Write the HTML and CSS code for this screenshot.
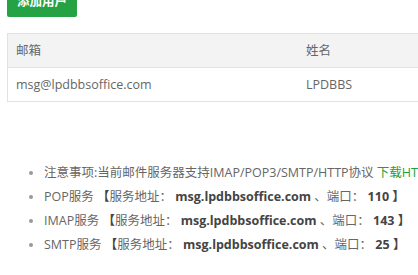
FILE: index.html
```html
<!DOCTYPE html>
<html lang="zh">
<head>
<meta charset="utf-8">
<link rel="stylesheet" href="styles.css">
</head>
<body>
<div class="page">
  <div class="toolbar">
    <button class="btn">添加用户</button>
  </div>
  <div class="table-wrap">
    <table class="table">
      <thead>
        <tr><th class="col-mail">邮箱</th><th>姓名</th></tr>
      </thead>
      <tbody>
        <tr><td class="col-mail">msg@lpdbbsoffice.com</td><td>LPDBBS</td></tr>
      </tbody>
    </table>
  </div>
  <ul class="notes">
    <li>注意事项:当前邮件服务器支持IMAP/POP3/SMTP/HTTP协议 <a class="link" href="#">下载HTTP客户端</a></li>
    <li>POP服务 <b>【</b>服务地址： <b>msg.lpdbbsoffice.com</b> 、端口： <b>110 】</b></li>
    <li>IMAP服务 <b>【</b>服务地址： <b>msg.lpdbbsoffice.com</b> 、端口： <b>143 】</b></li>
    <li>SMTP服务 <b>【</b>服务地址： <b>msg.lpdbbsoffice.com</b> 、端口： <b>25 】</b></li>
  </ul>
</div>
</body>
</html>
```
FILE: styles.css
```css
html, body {
  margin: 0;
  padding: 0;
  overflow: hidden;
  background: #fff;
}
body {
  font-family: "Open Sans", "Noto Sans CJK SC", sans-serif;
  color: #666;
}
.page {
  padding-left: 7px;
}
.toolbar {
  margin-top: -13px;
  height: 30px;
}
.btn {
  height: 30px;
  line-height: 30px;
  padding: 0 10px;
  border: none;
  border-radius: 2px;
  background: #25a244;
  color: #fff;
  font-family: "Open Sans", "Noto Sans CJK SC", sans-serif;
  font-size: 12.5px;
  font-weight: bold;
  display: block;
}
.table-wrap {
  margin-top: 16px;
  width: 600px;
}
.table {
  width: 600px;
  border-collapse: collapse;
  font-size: 12.5px;
  color: #666;
}
.table th, .table td {
  border-top: 1px solid #e2e2e2;
  border-bottom: 1px solid #e2e2e2;
  text-align: left;
  font-weight: normal;
  padding: 7px 8px;
  line-height: 19px;
  height: 19px;
}
.table th:first-child, .table td:first-child {
  border-left: 1px solid #e2e2e2;
}
.table th {
  background: #f3f3f3;
}
.col-mail {
  width: 274px;
}
.notes {
  margin: 59px 0 0 0;
  padding-left: 37px;
  font-size: 12.5px;
  line-height: 24px;
  color: #666;
  white-space: nowrap;
}
.notes li::marker {
  color: #999;
}
.notes b {
  color: #444;
  font-weight: bold;
}
.link {
  color: #20a035;
  text-decoration: none;
}
```
